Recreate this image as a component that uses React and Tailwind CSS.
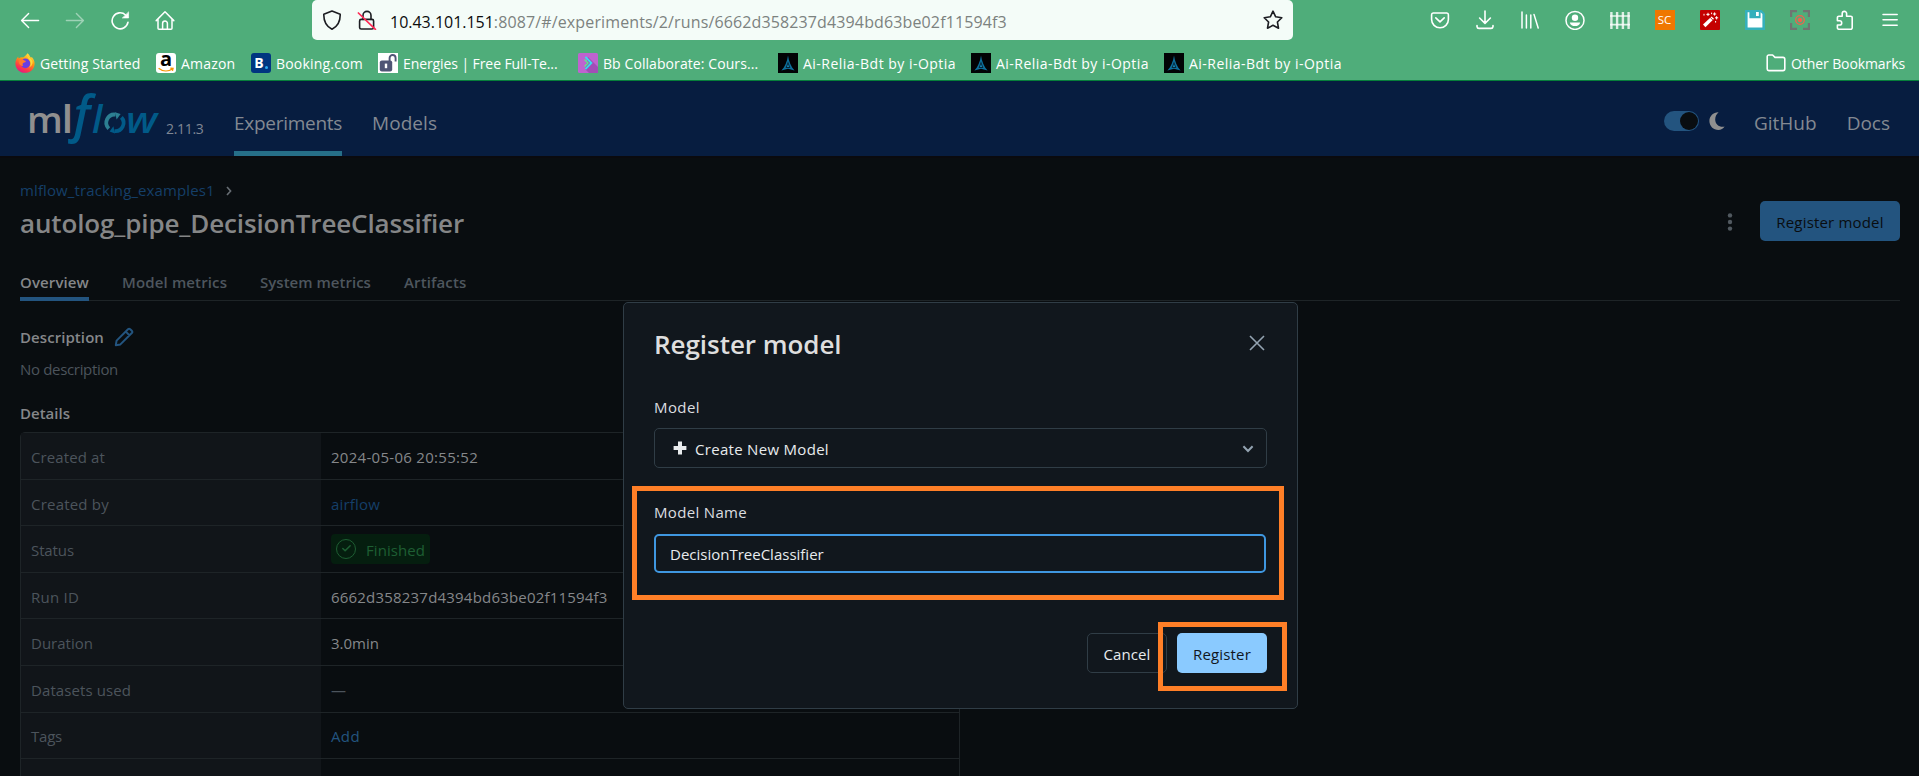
import { Check } from "lucide-react";

/* ---------- browser chrome icons ---------- */

const line = {
  fill: "none",
  stroke: "currentColor",
  strokeWidth: 1.4,
  strokeLinecap: "round",
  strokeLinejoin: "round",
};

function Icon({ children, className = "size-5", ...rest }) {
  return (
    <svg viewBox="0 0 20 20" className={"block shrink-0 " + className} {...line} {...rest}>
      {children}
    </svg>
  );
}

const BackIcon = () => (
  <Icon>
    <path d="M18.6 10.5H1.8M8.6 3.5L1.6 10.5L8.6 17.5" />
  </Icon>
);
const ForwardIcon = () => (
  <Icon className="size-5 text-white/45">
    <path d="M1.4 10.5H18.2M11.4 3.5L18.4 10.5L11.4 17.5" />
  </Icon>
);
const ReloadIcon = () => (
  <Icon strokeWidth={1.6}>
    <path d="M18 12.2A8 8 0 1 1 15.6 5" />
    <path d="M18.6 2.2V8H12.6Z" fill="currentColor" strokeWidth="0.6" />
  </Icon>
);
const HomeIcon = () => (
  <Icon strokeWidth={1.5}>
    <path d="M1.2 10.6L10 1.8L18.8 10.6M3 9V18.2A1 1 0 0 0 4 19.2H16A1 1 0 0 0 17 18.2V9" />
    <path d="M7.6 19V13.4A2.4 2.4 0 0 1 12.4 13.4V19" />
  </Icon>
);
const ShieldIcon = () => (
  <Icon strokeWidth={1.6} className="size-5 text-[#1c1d22]">
    <path d="M10 1L18.2 4.2C18.4 11.5 15.6 16.4 10 19.2C4.4 16.4 1.6 11.5 1.8 4.2Z" />
  </Icon>
);
const InsecureLockIcon = () => (
  <Icon strokeWidth={1.6} className="size-5 text-[#1c1d22]">
    <path d="M6 9.4V5.4A4 4 0 0 1 14 5.4V9.4" />
    <rect x="2.6" y="9.4" width="14" height="9.6" rx="1.6" />
    <path d="M1.4 3L18.4 19.4" stroke="#ff2a55" strokeWidth="1.7" />
  </Icon>
);
const StarIcon = () => (
  <Icon strokeWidth={1.6} className="size-5 text-[#1c1d22]">
    <path d="M10 1.2L12.7 6.8L18.8 7.7L14.4 12L15.5 18.2L10 15.3L4.5 18.2L5.6 12L1.2 7.7L7.3 6.8Z" />
  </Icon>
);

const toolbarIcons = [
  <Icon key="pocket" strokeWidth={1.6}>
    <path d="M3.2 3H16.8A1.8 1.8 0 0 1 18.4 4.8V9.6A8.4 8.2 0 0 1 1.6 9.6V4.8A1.8 1.8 0 0 1 3.2 3Z" />
    <path d="M5.8 7.8L10 11.8L14.2 7.8" />
  </Icon>,
  <Icon key="download" strokeWidth={1.6}>
    <path d="M10 1V13M4.6 8L10 13.4L15.4 8M2 15.6V16.6A2 2 0 0 0 4 18.4H16A2 2 0 0 0 18 16.6V15.6" />
  </Icon>,
  <Icon key="library" strokeWidth={1.5}>
    <path d="M2 2V18M6.4 5V18M10.8 5V18M14 4.4L18.2 18" />
  </Icon>,
  <Icon key="account" strokeWidth={1.5}>
    <circle cx="10" cy="10.4" r="9" />
    <circle cx="10" cy="7.8" r="3.2" fill="currentColor" stroke="none" />
    <path d="M4.8 12.4H15.2C14.6 15 12.6 16 10 16S5.4 15 4.8 12.4Z" fill="currentColor" stroke="none" />
  </Icon>,
  <Icon key="fence" strokeWidth={2.4} strokeLinecap="butt" className="size-5 text-white/80">
    <path d="M1.4 2V19M7.1 2V19M12.9 2V19M18.6 2V19" />
    <path d="M0 6H20M0 14.6H20" strokeWidth="1.7" />
  </Icon>,
  <span
    key="sc"
    className="flex size-5 items-center justify-center bg-[#ef7700] text-[11.5px] leading-none text-white"
  >
    SC
  </span>,
  <Icon key="wand" stroke="none">
    <rect width="20" height="20" rx="1" fill="#c40000" />
    <path d="M3 14.6L11.6 6.4L14 8.8L5.4 17.2Z" fill="#fff" />
    <path d="M10.4 7.6L12.8 10" stroke="#c40000" strokeWidth="0.9" />
    <path
      d="M8 3.2V5.6M6.8 4.4H9.2M14.6 2.8V5.2M13.4 4H15.8M16.6 6.6V9M15.4 7.8H17.8M4 4.2V5.2M11.6 3V3.8M15.6 11.4V12.2"
      stroke="#fff"
      strokeWidth="1"
    />
  </Icon>,
  <Icon key="save" stroke="none">
    <path d="M0 0H16.5L20 3.5V20H0Z" fill="#35b0bc" />
    <path d="M2.6 2.2H4.4V8.2H15.6V2.2L17.4 4V17.6H2.6Z" fill="#fff" />
    <path d="M11 2H13.8V6H11Z" fill="#fff" />
  </Icon>,
  <Icon key="capture" strokeLinecap="butt" strokeLinejoin="miter">
    <path
      d="M1.1 7V1.1H7M13 1.1H18.9V7M18.9 13V18.9H13M7 18.9H1.1V13"
      stroke="#6f7471"
      strokeWidth="2.2"
    />
    <circle cx="10" cy="10" r="4.3" stroke="#f4604c" strokeWidth="1.3" />
    <circle cx="10" cy="10" r="2" fill="#f4604c" stroke="#f4604c" strokeWidth="0.6" />
  </Icon>,
  <Icon key="extensions" strokeWidth={1.6}>
    <path d="M7.2 6.2V3.6A2 2 0 0 1 11.6 3.6V6.2H15.6A1.5 1.5 0 0 1 17.2 7.8V17.8A1.5 1.5 0 0 1 15.6 19.2H4A1.4 1.4 0 0 1 2.4 17.8V15H4.6A2.1 2.1 0 0 0 4.6 10.8H2.4V7.8A1.5 1.5 0 0 1 4 6.2Z" />
  </Icon>,
  <Icon key="menu" strokeWidth={1.5}>
    <path d="M3 4.4H17.2M3 9.8H17.2M3 15.2H17.2" />
  </Icon>,
];

/* ---------- bookmark favicons ---------- */

const Firefox = () => (
  <svg viewBox="0 0 20 20" className="block size-5 shrink-0">
    <defs>
      <linearGradient id="fx" x1="0.8" y1="0" x2="0.3" y2="1">
        <stop offset="0" stopColor="#fff04a" />
        <stop offset="0.4" stopColor="#ff980e" />
        <stop offset="0.75" stopColor="#ff3b46" />
        <stop offset="1" stopColor="#e31587" />
      </linearGradient>
    </defs>
    <path
      d="M12.6 0.2C14.6 2 15 3.6 15.8 4.6C16.6 4.4 17 4.2 17 4.2C18.8 6.2 19.8 8.4 19.6 11.2C19.2 16.2 15.2 19.8 10 19.8C4.6 19.8 0.4 15.8 0.4 10.4C0.4 7.6 1.6 5 3.2 3.4C3.2 4.4 3.4 5 3.8 5.4C5 4.4 6.8 4 8 4.4C9 4 10.4 3 12.6 0.2Z"
      fill="url(#fx)"
    />
    <circle cx="10.4" cy="10.4" r="4.8" fill="#6a3de0" />
    <path d="M3.8 6.4C6.4 5.4 8.2 6.4 9.4 7.4C11.4 7.6 11.2 9 9.2 9.6C7.6 10 7.2 11.4 8 13C5.2 13 3.2 10 3.8 6.4Z" fill="#ff7a2c" />
    <path d="M12.4 2.4C12 5 15.6 6.4 15.6 10.4C15.6 12.2 14.8 13.6 14 14.4C16.4 13.6 17.8 11.4 17.6 8.8C17.2 5.8 13.8 5 12.4 2.4Z" fill="#ffd93a" />
  </svg>
);
const Amazon = () => (
  <svg viewBox="0 0 20 20" className="block size-5 shrink-0 overflow-visible" fill="none">
    <rect width="20" height="20" rx="3" fill="#fff" />
    <text x="10" y="13.2" fontSize="20" fontWeight="700" textAnchor="middle" fill="#000">
      a
    </text>
    <path d="M2.6 15.2C7 18.8 12.6 18.6 16.6 15.8M14.4 15.2L17 15.4L16.4 17.8" stroke="#f79400" strokeWidth="1.4" />
  </svg>
);
const Booking = () => (
  <span className="flex size-5 shrink-0 items-center justify-center gap-px rounded-[3px] bg-[#003580]">
    <span className="text-[14px] leading-none font-bold text-white">B</span>
    <span className="mt-2 size-[3px] rounded-full bg-[#29a9f0]" />
  </span>
);
const Energies = () => (
  <svg viewBox="0 0 20 20" className="block size-5 shrink-0" fill="none">
    <rect width="20" height="20" fill="#fff" />
    <path d="M11.6 8V5A3 3 0 0 1 17.6 5V8.6" stroke="#4f5575" strokeWidth="1.9" />
    <rect x="1.8" y="7.4" width="12.4" height="11" rx="2" fill="#4f5575" />
    <rect x="6.8" y="10.6" width="2.4" height="4.6" fill="#fff" />
  </svg>
);
const Blackboard = () => (
  <svg viewBox="0 0 20 20" className="block size-5 shrink-0" fill="none">
    <rect width="20" height="20" rx="1.5" fill="#bf63cf" />
    <path d="M10 4L20 14V20H11L7 16Z" fill="#a24db6" />
    <path d="M7.4 3.8L13.4 10L7.4 16.2" stroke="#37dff0" strokeWidth="1.8" />
    <path d="M6.6 6.4L10 10L6.6 13.6" stroke="#5dea8c" strokeWidth="1.4" />
  </svg>
);
const Relia = () => (
  <svg viewBox="0 0 20 20" className="block size-5 shrink-0">
    <rect width="20" height="20" fill="#020305" />
    <path d="M10 2.4C10.8 8 13 14 16.6 17.6L10 15.8L3.4 17.6C7 14 9.2 8 10 2.4Z" fill="#0d6f9c" />
    <path d="M10 8.6L12.4 15H7.6Z" fill="#07283a" />
    <path d="M10 11L11 14H9Z" fill="#1590c4" />
  </svg>
);

const bookmarks = [
  { icon: <Firefox />, label: "Getting Started", box: "w-[141px]", track: "tracking-[0.1px]" },
  { icon: <Amazon />, label: "Amazon", box: "w-[95px]", track: "tracking-[0.2px]" },
  { icon: <Booking />, label: "Booking.com", box: "w-[127px]", track: "tracking-[0.2px]" },
  { icon: <Energies />, label: "Energies | Free Full-Te...", box: "w-[200px]", track: "tracking-[-0.09px]" },
  { icon: <Blackboard />, label: "Bb Collaborate: Cours...", box: "w-[200px]", track: "tracking-[0.08px]" },
  { icon: <Relia />, label: "Ai-Relia-Bdt by i-Optia", box: "w-[193px]", track: "tracking-[0.48px]" },
  { icon: <Relia />, label: "Ai-Relia-Bdt by i-Optia", box: "w-[193px]", track: "tracking-[0.48px]" },
  { icon: <Relia />, label: "Ai-Relia-Bdt by i-Optia", box: "w-[193px]", track: "tracking-[0.48px]" },
];

function BrowserChrome() {
  return (
    <div className="h-[81px] border-b border-[#067f3a] bg-[#4fad7a] text-white">
      <div className="flex h-10">
        <div className="flex pl-[7px]">
          {[<BackIcon key="b" />, <ForwardIcon key="f" />, <ReloadIcon key="r" />, <HomeIcon key="h" />].map(
            (icon, i) => (
              <div key={i} className="flex w-[45px] items-center justify-center">
                {icon}
              </div>
            )
          )}
        </div>
        <div className="ml-[125px] flex w-[981px] items-center rounded-[5px] bg-[#f4fcf8] pr-[10px] pl-[10px]">
          <ShieldIcon />
          <div className="ml-[15px]">
            <InsecureLockIcon />
          </div>
          <div className="mt-[3px] ml-[13px] flex text-[16px] leading-6 whitespace-nowrap">
            <span className="tracking-[-0.02px] text-[#0c0c0d]">10.43.101.151</span>
            <span className="tracking-[0.13px] text-[#7c827f]">
              :8087/#/experiments/2/runs/6662d358237d4394bd63be02f11594f3
            </span>
          </div>
          <div className="ml-auto">
            <StarIcon />
          </div>
        </div>
        <div className="ml-[124px] flex">
          {toolbarIcons.map((icon, i) => (
            <div key={i} className="flex w-[45px] items-center justify-center">
              {icon}
            </div>
          ))}
        </div>
      </div>
      <div className="flex h-10 items-center pt-[6px] pr-[14px] pl-[15px] text-[14px] leading-5 whitespace-nowrap">
        {bookmarks.map((b, i) => (
          <div key={i} className={"flex shrink-0 items-center gap-[5px] " + b.box}>
            {b.icon}
            <span className={"pt-px " + b.track}>{b.label}</span>
          </div>
        ))}
        <div className="ml-auto flex items-center gap-[5px]">
          <Icon strokeWidth={1.6}>
            <path d="M1.2 16V3.6A1.6 1.6 0 0 1 2.8 2H6.6L9 4.4H17A1.8 1.8 0 0 1 18.8 6.2V15.8A1.8 1.8 0 0 1 17 17.6H2.8A1.6 1.6 0 0 1 1.2 16Z" />
          </Icon>
          <span className="pt-px tracking-[-0.1px]">Other Bookmarks</span>
        </div>
      </div>
    </div>
  );
}

/* ---------- MLflow header ---------- */

function MlflowLogo() {
  return (
    <svg viewBox="0 0 134 64" className="block h-[64px] w-[134px] overflow-visible" fontFamily="Open Sans">
      <g fill="#8f8f8f" fontWeight="600">
        <text x="-2" y="44" fontSize="36.5" textLength="35.8" lengthAdjust="spacingAndGlyphs">
          m
        </text>
        <text x="32.6" y="44" fontSize="38" textLength="11.8" lengthAdjust="spacingAndGlyphs">
          l
        </text>
      </g>
      <g fill="#015a88" fontStyle="italic" fontWeight="600">
        <text x="44.6" y="43.2" fontSize="50" textLength="16.8" lengthAdjust="spacingAndGlyphs">
          f
        </text>
        <text x="63" y="44" fontSize="38" textLength="10.4" lengthAdjust="spacingAndGlyphs">
          l
        </text>
        <text x="97" y="44" fontSize="36.5" textLength="31.2" lengthAdjust="spacingAndGlyphs">
          w
        </text>
      </g>
      <g fill="none" strokeWidth="3.8">
        <path d="M79.8 39.6A8.2 8.2 0 0 1 86.6 25.6" stroke="#2c7f92" />
        <path d="M92.4 28.4A8.2 8.2 0 0 1 85.4 42.1" stroke="#015a88" />
      </g>
      <path d="M86 23.2L91.6 25L87.6 30.6Z" fill="#2c7f92" />
      <path d="M86 44.4L80.6 42.6L84.4 37.2Z" fill="#015a88" />
    </svg>
  );
}

function Header() {
  return (
    <header className="flex h-[75px] bg-[#071d40] text-[19px] leading-7 text-[#838992]">
      <div className="flex w-[234px] shrink-0 pt-[8px] pl-[29px]">
        <MlflowLogo />
        <span className="mt-[29px] ml-[3px] text-[14px] leading-[22px] tracking-[-0.3px] text-[#7f8794]">2.11.3</span>
      </div>
      <nav className="flex gap-[30px]">
        <a className="box-border border-b-[5px] border-[#266f88] pt-[28px] tracking-[-0.28px]">Experiments</a>
        <a className="pt-[28px] tracking-[0.05px]">Models</a>
      </nav>
      <div className="ml-auto flex pr-[29px]">
        <div className="mt-[30px] flex h-5 w-[35px] justify-end rounded-full bg-[#23547f] p-px">
          <div className="size-[18px] rounded-full bg-[#090d10]" />
        </div>
        <svg viewBox="0 0 16 18" className="mt-[31px] ml-[10px] block h-[18px] w-4" fill="#8f8f8f">
          <path d="M9.6 0.2C4.4 0 0.4 4 0.4 9S4.4 18 9.4 18C12 18 14.2 16.8 15.6 14.6C10.4 15.6 6.2 12.2 6.2 7.4C6.2 4.4 7.6 1.8 9.6 0.2Z" />
        </svg>
        <a className="ml-[29px] pt-[28px]">GitHub</a>
        <a className="ml-[30px] pt-[28px]">Docs</a>
      </div>
    </header>
  );
}

/* ---------- run page ---------- */

const tabs = [
  { label: "Overview", active: true, box: "w-[69px] tracking-[0.12px]" },
  { label: "Model metrics", box: "w-[105px] tracking-[0.14px]" },
  { label: "System metrics", box: "w-[111px] tracking-[0.02px]" },
  { label: "Artifacts", box: "w-[63px] tracking-[0.12px]" },
];

const Finished = () => (
  <span className="flex h-[30px] w-[99px] items-center rounded-[4px] bg-[#051e0f] pl-[5px] text-[#1e5e33]">
    <span className="flex size-5 items-center justify-center rounded-full border-[1.6px] border-current">
      <Check size={11} strokeWidth={3.4} />
    </span>
    <span className="ml-[10px] pt-[2px] tracking-[0.07px]">Finished</span>
  </span>
);

const rows = [
  { label: "Created at", track: "tracking-[0.11px]", h: "h-[47px]", value: <span className="tracking-[0.29px]">2024-05-06 20:55:52</span> },
  { label: "Created by", track: "tracking-[0.21px]", h: "h-[46px]", value: <span className="tracking-[0.18px] text-[#153f68]">airflow</span> },
  { label: "Status", track: "tracking-[-0.1px]", h: "h-[47px]", value: <Finished />, badge: true },
  { label: "Run ID", track: "tracking-[0.23px]", h: "h-[46px]", value: <span className="tracking-[0.2px]">6662d358237d4394bd63be02f11594f3</span> },
  { label: "Duration", h: "h-[47px]", value: "3.0min" },
  { label: "Datasets used", track: "tracking-[0.09px]", h: "h-[47px]", value: <span className="text-[#4c545c]">—</span> },
  { label: "Tags", track: "tracking-[-0.22px]", h: "h-[46px]", value: <span className="tracking-[0.39px] text-[#23547f]">Add</span>, tight: true },
  { label: "", h: "h-[47px]", value: "" },
];

function RunPage() {
  return (
    <main className="flex-1 overflow-hidden border-t-2 border-[#0a0a0e] bg-[#090d10] pt-[20px] pr-[19px] pl-5 text-[15px] leading-6 text-[#85878a]">
      <div className="flex h-6 items-center">
        <a className="tracking-[0.11px] text-[#153f68]">mlflow_tracking_examples1</a>
        <svg viewBox="0 0 6 10" className="mt-[2px] ml-[11px] block h-[10px] w-[6px]" fill="none" stroke="#676d73" strokeWidth="1.6">
          <path d="M1 1L4.6 5L1 9" />
        </svg>
      </div>
      <div className="mt-px flex h-[40px]">
        <h1 className="text-[26px] leading-[40px] font-semibold tracking-[-0.13px] text-[#858687]">
          autolog_pipe_DecisionTreeClassifier
        </h1>
        <svg viewBox="0 0 6 20" className="mt-[9px] ml-auto block h-5 w-[6px]" fill="#515960">
          <circle cx="3" cy="3.4" r="2.2" />
          <circle cx="3" cy="10" r="2.2" />
          <circle cx="3" cy="16.6" r="2.2" />
        </svg>
        <button className="mt-[-2px] ml-[27px] h-10 w-[140px] rounded-[5px] bg-[#23547f] pt-[2px] text-center tracking-[0.18px] text-[#090d10]">
          Register model
        </button>
      </div>
      <div className="mt-[27px] flex h-[31px] gap-[33px] border-b border-[#1e2427] font-semibold whitespace-nowrap text-[#4e565e]">
        {tabs.map((t) => (
          <div
            key={t.label}
            className={
              "h-[31px] " + t.box + (t.active ? " border-b-4 border-[#23547f] text-[#85878a]" : "")
            }
          >
            {t.label}
          </div>
        ))}
      </div>
      <div className="mt-[24px] flex h-6 items-center font-semibold">
        <span className="tracking-[0.07px]">Description</span>
        <svg viewBox="0 0 20 20" className="ml-[10px] block size-5" fill="none" stroke="#23547f" strokeWidth="2" strokeLinejoin="round">
          <path d="M1.8 18.2L2.6 13.6L14 2.2A1.6 1.6 0 0 1 16.2 2.2L17.8 3.8A1.6 1.6 0 0 1 17.8 6L6.4 17.4ZM11.8 4.6L15.4 8.2" />
        </svg>
      </div>
      <p className="mt-[8px] tracking-[-0.33px] text-[#4c545c]">No description</p>
      <h2 className="mt-[20px] font-semibold">Details</h2>
      <div className="mt-[7px] w-[940px] rounded-t-[5px] border border-[#1e2427]">
        {rows.map((r, i) => (
          <div key={i} className={"flex items-center border-b border-[#1e2427] " + r.h}>
            <div
              className={
                "flex h-full w-[300px] items-center bg-[#111519] pl-[10px] text-[#4c545c] " +
                (r.tight ? "pt-px " : "pt-[2px] ") +
                (r.track || "")
              }
            >
              {r.label}
            </div>
            <div className={"pl-[10px] " + (r.badge ? "mt-[-1px]" : r.tight ? "pt-px" : "pt-[2px]")}>{r.value}</div>
          </div>
        ))}
      </div>
    </main>
  );
}

/* ---------- dialog ---------- */

function RegisterDialog() {
  return (
    <section className="absolute top-[302px] left-[623px] h-[407px] w-[675px] rounded-[5px] border border-[#303d46] bg-[#11171d] px-[30px] text-[15px] leading-6 text-[#dcdee0]">
      <div className="flex pt-[20px]">
        <h2 className="text-[26px] leading-[42px] font-semibold tracking-[-0.05px] text-[#dedede]">Register model</h2>
        <svg viewBox="0 0 16 16" className="mt-[12px] mr-[2px] ml-auto block size-4" fill="none" stroke="#93a3b1" strokeWidth="1.6">
          <path d="M1 1L15 15M15 1L1 15" />
        </svg>
      </div>
      <label className="mt-[30px] block tracking-[0.42px]">Model</label>
      <div className="mt-[9px] flex h-10 items-center rounded-[5px] border border-[#303d46] pr-[12px] pl-[18px]">
        <svg viewBox="0 0 14 14" className="block size-[14px]" fill="#e8ebed">
          <path d="M5 0.6H9V5H13.4V9H9V13.4H5V9H0.6V5H5Z" />
        </svg>
        <span className="mt-px ml-[8px] tracking-[0.3px] text-[#e8ebed]">Create New Model</span>
        <svg viewBox="0 0 12 8" className="mt-px ml-auto block h-2 w-3" fill="none" stroke="#93a3b1" strokeWidth="2">
          <path d="M1.4 1.2L6 6L10.6 1.2" />
        </svg>
      </div>
      <label className="mt-[32px] block tracking-[0.33px]">Model Name</label>
      <div className="mt-[10px] h-[39px] w-[612px] rounded-[5px] border-2 border-[#3f97e0] pt-[6px] pl-[14px] text-[#e8ebed]">
        DecisionTreeClassifier
      </div>
      <div className="mt-[60px] flex justify-end gap-[10px]">
        <button className="h-10 w-20 rounded-[5px] border border-[#303d46] pt-[2px] text-center tracking-[0.1px] text-[#e8ebed]">
          Cancel
        </button>
        <button className="h-10 w-[90px] rounded-[5px] bg-[#8acaff] pt-[2px] text-center tracking-[0.17px] text-[#11171d]">
          Register
        </button>
      </div>
      <div className="pointer-events-none absolute top-[183px] left-[8px] h-[114px] w-[652px] border-5 border-[#ff7f27]" />
      <div className="pointer-events-none absolute top-[319px] left-[534px] h-[69px] w-[129px] border-5 border-[#ff7f27]" />
    </section>
  );
}

export default function App() {
  return (
    <div className="relative flex h-[776px] flex-col overflow-hidden bg-[#090d10] font-['Open_Sans','Noto_Sans',sans-serif]">
      <BrowserChrome />
      <Header />
      <RunPage />
      <RegisterDialog />
    </div>
  );
}
